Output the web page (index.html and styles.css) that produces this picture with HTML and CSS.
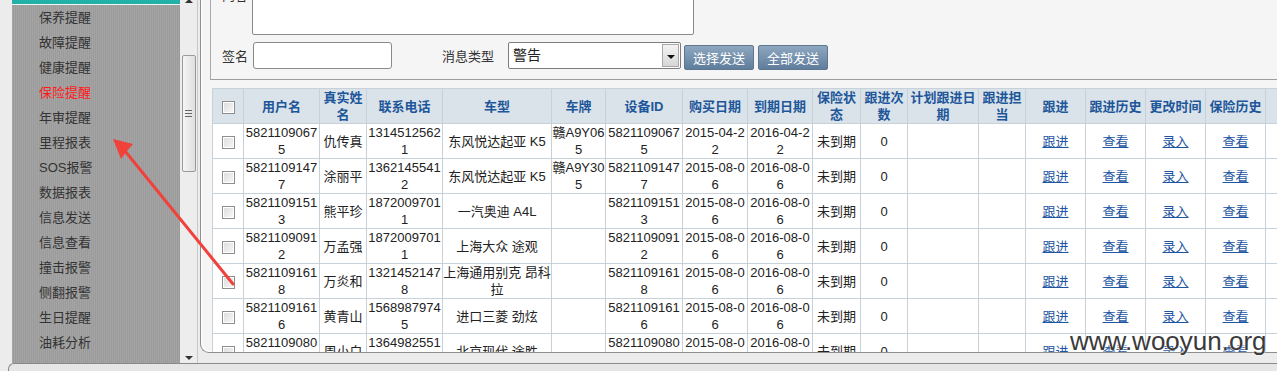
FILE: index.html
```html
<!DOCTYPE html>
<html lang="zh-CN">
<head>
	<meta charset="UTF-8">
	<title>保险提醒</title>
	<link rel="stylesheet" href="styles.css">
</head>
<body>
	<div class="frame">
		<div class="leftpad"></div>
		<!--左侧菜单-->
		<div class="sidebar">
			<div class="sidebar_top"></div>
			<ul class="menu">
				<li>保养提醒</li>
				<li>故障提醒</li>
				<li>健康提醒</li>
				<li class="menu_on">保险提醒</li>
				<li>年审提醒</li>
				<li>里程报表</li>
				<li>SOS报警</li>
				<li>数据报表</li>
				<li>信息发送</li>
				<li>信息查看</li>
				<li>撞击报警</li>
				<li>侧翻报警</li>
				<li>生日提醒</li>
				<li>油耗分析</li>
			</ul>
		</div>
		<div class="scroll">
			<div class="scroll_up"></div>
			<div class="scroll_thumb"><span></span><span></span><span></span></div>
			<div class="scroll_down"></div>
		</div>
		<!--主体-->
		<div class="main">
			<div class="panel">
				<div class="send_form">
					<div class="form_row">
						<label class="lbl lbl_top">内容</label>
						<div class="txt_area"></div>
					</div>
					<div class="form_row row2">
						<label class="lbl">签名</label>
						<div class="txt_input"></div>
						<label class="lbl lbl_type">消息类型</label>
						<div class="select_box">
							<span class="select_val">警告</span>
							<span class="select_btn"></span>
						</div>
						<button class="send_btn">选择发送</button>
						<button class="send_btn send_all">全部发送</button>
					</div>
				</div>
				<div class="grid_wrap">
					<table class="grid">
						<colgroup>
							<col style="width:31px"><col style="width:76px"><col style="width:47px"><col style="width:76px">
							<col style="width:109px"><col style="width:54px"><col style="width:77px"><col style="width:65px">
							<col style="width:65px"><col style="width:48px"><col style="width:47px"><col style="width:71px">
							<col style="width:47px"><col style="width:60px"><col style="width:60px"><col style="width:60px">
							<col style="width:60px"><col style="width:60px">
						</colgroup>
						<tr class="grid_head">
							<th><span class="cb"></span></th>
							<th>用户名</th><th>真实姓名</th><th>联系电话</th><th>车型</th><th>车牌</th>
							<th>设备ID</th><th>购买日期</th><th>到期日期</th><th>保险状态</th><th>跟进次数</th>
							<th>计划跟进日期</th><th>跟进担当</th><th>跟进</th><th>跟进历史</th><th>更改时间</th>
							<th>保险历史</th><th></th>
						</tr>
						<tr>
							<td><span class="cb"></span></td>
							<td>58211090675</td><td>仇传真</td><td>13145125621</td><td>东风悦达起亚 K5</td><td>赣A9Y065</td>
							<td>58211090675</td><td>2015-04-22</td><td>2016-04-22</td><td>未到期</td><td>0</td><td></td><td></td>
							<td><a href="#">跟进</a></td><td><a href="#">查看</a></td><td><a href="#">录入</a></td><td><a href="#">查看</a></td><td></td>
						</tr>
						<tr>
							<td><span class="cb"></span></td>
							<td>58211091477</td><td>涂丽平</td><td>13621455412</td><td>东风悦达起亚 K5</td><td>赣A9Y305</td>
							<td>58211091477</td><td>2015-08-06</td><td>2016-08-06</td><td>未到期</td><td>0</td><td></td><td></td>
							<td><a href="#">跟进</a></td><td><a href="#">查看</a></td><td><a href="#">录入</a></td><td><a href="#">查看</a></td><td></td>
						</tr>
						<tr>
							<td><span class="cb"></span></td>
							<td>58211091513</td><td>熊平珍</td><td>18720097011</td><td>一汽奥迪 A4L</td><td></td>
							<td>58211091513</td><td>2015-08-06</td><td>2016-08-06</td><td>未到期</td><td>0</td><td></td><td></td>
							<td><a href="#">跟进</a></td><td><a href="#">查看</a></td><td><a href="#">录入</a></td><td><a href="#">查看</a></td><td></td>
						</tr>
						<tr>
							<td><span class="cb"></span></td>
							<td>58211090912</td><td>万孟强</td><td>18720097011</td><td>上海大众 途观</td><td></td>
							<td>58211090912</td><td>2015-08-06</td><td>2016-08-06</td><td>未到期</td><td>0</td><td></td><td></td>
							<td><a href="#">跟进</a></td><td><a href="#">查看</a></td><td><a href="#">录入</a></td><td><a href="#">查看</a></td><td></td>
						</tr>
						<tr>
							<td><span class="cb"></span></td>
							<td>58211091618</td><td>万炎和</td><td>13214521478</td><td>上海通用别克 昂科拉</td><td></td>
							<td>58211091618</td><td>2015-08-06</td><td>2016-08-06</td><td>未到期</td><td>0</td><td></td><td></td>
							<td><a href="#">跟进</a></td><td><a href="#">查看</a></td><td><a href="#">录入</a></td><td><a href="#">查看</a></td><td></td>
						</tr>
						<tr>
							<td><span class="cb"></span></td>
							<td>58211091616</td><td>黄青山</td><td>15689879745</td><td>进口三菱 劲炫</td><td></td>
							<td>58211091616</td><td>2015-08-06</td><td>2016-08-06</td><td>未到期</td><td>0</td><td></td><td></td>
							<td><a href="#">跟进</a></td><td><a href="#">查看</a></td><td><a href="#">录入</a></td><td><a href="#">查看</a></td><td></td>
						</tr>
						<tr>
							<td><span class="cb"></span></td>
							<td>58211090806</td><td>周小白</td><td>13649825516</td><td>北京现代 途胜</td><td></td>
							<td>58211090806</td><td>2015-08-06</td><td>2016-08-06</td><td>未到期</td><td>0</td><td></td><td></td>
							<td><a href="#">跟进</a></td><td><a href="#">查看</a></td><td><a href="#">录入</a></td><td><a href="#">查看</a></td><td></td>
						</tr>
					</table>
				</div>
			</div>
		</div>
	</div>
	<div class="footer"></div>

	<!--红色箭头-->
	<svg class="arrow" width="1277" height="371" viewBox="0 0 1277 371">
		<line x1="125" y1="151" x2="233" y2="284" stroke="#f0413b" stroke-width="3" stroke-linecap="round"/>
		<polygon points="113,139 133,144 127,151 121,159" fill="#f0413b"/>
	</svg>
	<div class="watermark">www.wooyun.org</div>
</body>
</html>
```

FILE: styles.css
```css
/*整体*/

body {
	margin: 0;
	width: 1277px;
	height: 371px;
	overflow: hidden;
	position: relative;
	background-color: #ececec;
	font-family: "Liberation Sans", "Noto Sans CJK SC", sans-serif;
	font-size: 13px;
	color: #222;
}

.frame {
	display: flex;
	height: 363px;
}

.leftpad {
	width: 12px;
	background-color: #ececec;
}

/*左侧菜单*/

.sidebar {
	width: 168px;
	background: repeating-linear-gradient(90deg, #a4a4a4 0 1px, #9b9b9b 1px 2px);
}

.sidebar_top {
	height: 4px;
	background-color: #22b1a9;
	border-bottom: 1px solid #f4f4f4;
}

ul {
	list-style: none;
	margin: 0;
	padding-left: 0px;
}

.menu li {
	height: 25px;
	line-height: 25px;
	padding-left: 27px;
	color: #333;
}

.menu .menu_on {
	color: #ff1a1a;
}

.scroll {
	width: 17px;
	background-color: #ededed;
	border-right: 1px solid #c8c8c8;
	display: flex;
	flex-direction: column;
	align-items: center;
}

.scroll_up {
	width: 0;
	height: 0;
	border-left: 4px solid transparent;
	border-right: 4px solid transparent;
	border-bottom: 4px solid #333;
	margin-top: -1px;
}

.scroll_thumb {
	width: 12px;
	height: 115px;
	margin-top: 52px;
	border: 1px solid #9a9a9a;
	border-radius: 2px;
	background: linear-gradient(90deg, #f6f6f6, #dedede);
	display: flex;
	flex-direction: column;
	align-items: center;
	justify-content: center;
	gap: 2px;
}

.scroll_thumb span {
	width: 7px;
	height: 1px;
	background-color: #666;
}

.scroll_down {
	width: 0;
	height: 0;
	border-left: 4px solid transparent;
	border-right: 4px solid transparent;
	border-top: 4px solid #333;
	margin-top: auto;
	margin-bottom: 3px;
}

/*主体*/

.main {
	flex: 1;
	min-width: 0;
	padding: 0 0 10px 2px;
}

.panel {
	height: 100%;
	box-sizing: border-box;
	background-color: #f5f5f5;
	border-left: 1px solid #8e8e8e;
	border-bottom: 1px solid #8e8e8e;
	border-bottom-left-radius: 9px;
	box-shadow: inset 1px -1px 0 #fff;
	padding-left: 9px;
	overflow: hidden;
}

.send_form {
	margin-top: -29px;
	border-left: 1px solid #a9a9a9;
	border-bottom: 1px solid #9c9c9c;
	padding: 0 0 10px 11px;
}

.form_row {
	display: flex;
	align-items: center;
}

.row2 {
	margin-top: 7px;
	height: 27px;
}

.lbl {
	width: 31px;
	color: #333;
}

.lbl_top {
	align-self: flex-start;
	margin-top: 14px;
	width: 30px;
}

.lbl_type {
	width: 66px;
	margin-left: 50px;
}

.txt_area {
	width: 440px;
	height: 62px;
	background-color: white;
	border: 1px solid #8a8a8a;
	border-radius: 2px;
}

.txt_input {
	width: 137px;
	height: 25px;
	background-color: white;
	border: 1px solid #8a8a8a;
	border-radius: 3px;
}

.select_box {
	width: 171px;
	height: 25px;
	background-color: white;
	border: 1px solid #7c7c7c;
	border-radius: 2px;
	display: flex;
	align-items: stretch;
}

.select_val {
	flex: 1;
	line-height: 25px;
	padding-left: 4px;
	font-size: 14px;
	color: #222;
}

.select_btn {
	width: 15px;
	margin: 1px;
	border: 1px solid #a8a8a8;
	background: linear-gradient(#f4f4f4, #d6d6d6);
	position: relative;
}

.select_btn::after {
	content: "";
	position: absolute;
	left: 4px;
	top: 10px;
	border-left: 4px solid transparent;
	border-right: 4px solid transparent;
	border-top: 4px solid #111;
}

.send_btn {
	width: 70px;
	height: 25px;
	margin-left: 3px;
	margin-top: 3px;
	padding: 0;
	border: 1px solid #5d7791;
	border-radius: 2px;
	background: linear-gradient(#8ea7c0, #5f7d9c);
	color: white;
	font-family: "Liberation Sans", "Noto Sans CJK SC", sans-serif;
	font-size: 13px;
	cursor: pointer;
}

.send_all {
	margin-left: 4px;
}

/*表格*/

.grid_wrap {
	padding: 8px 0 0 2px;
}

.grid {
	width: 1113px;
	table-layout: fixed;
	border-collapse: collapse;
	background-color: white;
}

.grid th,
.grid td {
	height: 34px;
	padding: 0;
	border: 1px solid #c6d1da;
	text-align: center;
	line-height: 17px;
	word-break: break-all;
}

.grid th {
	background-color: #dae3ea;
	color: #1d5699;
	font-weight: bold;
}

.grid a {
	color: #1d55a3;
}

.cb {
	display: inline-block;
	width: 11px;
	height: 11px;
	vertical-align: middle;
	border: 1px solid #8e8e8e;
	background: linear-gradient(135deg, #dcdcdc, #f8f8f8);
	box-shadow: inset 0 0 0 1px #fff;
}

.footer {
	height: 7px;
	margin-left: 8px;
	border-top: 1px solid #8a8a8a;
	border-left: 1px solid #8a8a8a;
	border-top-left-radius: 6px;
	background-color: #e6e6e6;
}

/*水印与箭头*/

.arrow {
	position: absolute;
	left: 0;
	top: 0;
	pointer-events: none;
}

.watermark {
	position: absolute;
	left: 1070px;
	top: 326px;
	font-size: 26px;
	line-height: 30px;
	color: #3a3a3a;
	text-shadow: 0 0 2px #fff, 0 0 1px #fff;
}
```
